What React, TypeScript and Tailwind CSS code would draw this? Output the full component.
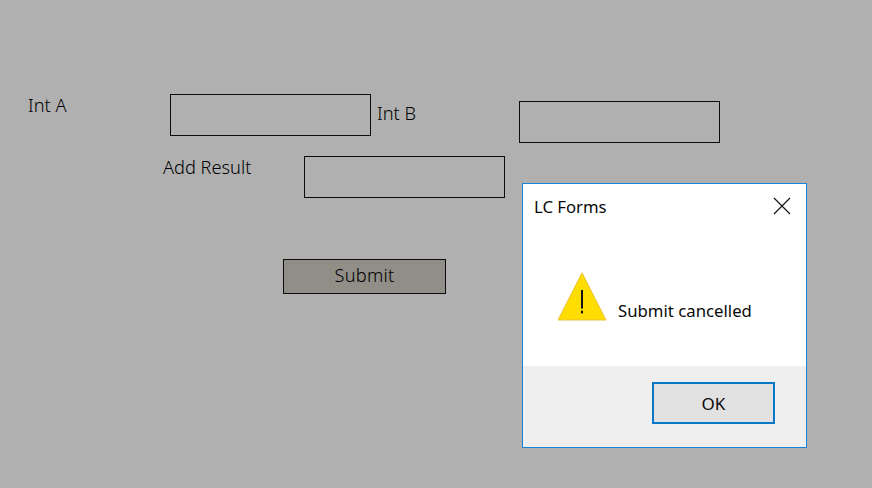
function Field({ className }: { className: string }) {
  return <input type="text" className={`h-[42px] w-[201px] shrink-0 border border-[#0c0c0c] bg-transparent ${className}`} />;
}

function MessageBox() {
  return (
    <div className="absolute left-[522px] top-[183px] flex h-[265px] w-[285px] flex-col border border-[#1883d7] bg-white text-[#0a0a0a]">
      <div className="flex h-[46px] items-center justify-between pl-[11px] pr-[15px]">
        <span className="text-[16.7px]">LC Forms</span>
        <svg width="18" height="18" viewBox="0 0 18 18" className="mt-[-2px]">
          <path d="M1 1 L17 17 M17 1 L1 17" stroke="#111" strokeWidth="1.1" fill="none" />
        </svg>
      </div>
      <div className="flex flex-1 items-start pl-[35px] pt-[42px]">
        <svg width="50" height="50" viewBox="0 0 50 50" className="shrink-0">
          <path d="M24 0.8 L48 48 L0 48 Z" fill="#ffdd00" stroke="#e8c23c" strokeWidth="1" />
          <rect x="23" y="18" width="2" height="18.5" fill="#111" />
          <rect x="23" y="38.7" width="2" height="2.7" fill="#111" />
        </svg>
        <span className="ml-[10px] mt-[26px] text-[16.75px]">Submit cancelled</span>
      </div>
      <div className="flex h-[81px] items-start justify-end bg-[#efefef] pr-[31px] pt-[16px]">
        <button className="h-[42px] w-[123px] border-2 border-[#0a78c8] bg-[#e1e1e1] pt-[1px] text-[17px]">OK</button>
      </div>
    </div>
  );
}

export default function App() {
  return (
    <div className="relative h-[488px] w-[872px] overflow-hidden bg-[#b0b0b0] font-['Noto_Sans','Open_Sans',sans-serif] text-black">
      <div className="pt-[94px]">
        <div className="flex items-start pl-[28px]">
          <span className="mt-[-2px] w-[142px] text-[18.2px] font-light">Int A</span>
          <Field className="" />
          <span className="ml-[6px] mt-[6px] w-[142px] text-[18.2px] font-light">Int B</span>
          <Field className="mt-[7px]" />
        </div>
        <div className="mt-[13px] flex items-start pl-[163px]">
          <span className="mt-[-2px] w-[141px] text-[18.2px] font-light">Add Result</span>
          <Field className="" />
        </div>
        <button className="ml-[283px] mt-[61px] block h-[35px] w-[163px] border border-[#0c0c0c] bg-[#918e87] pb-[2px] text-[18.2px] font-light tracking-[0.3px]">Submit</button>
      </div>
      <MessageBox />
    </div>
  );
}
